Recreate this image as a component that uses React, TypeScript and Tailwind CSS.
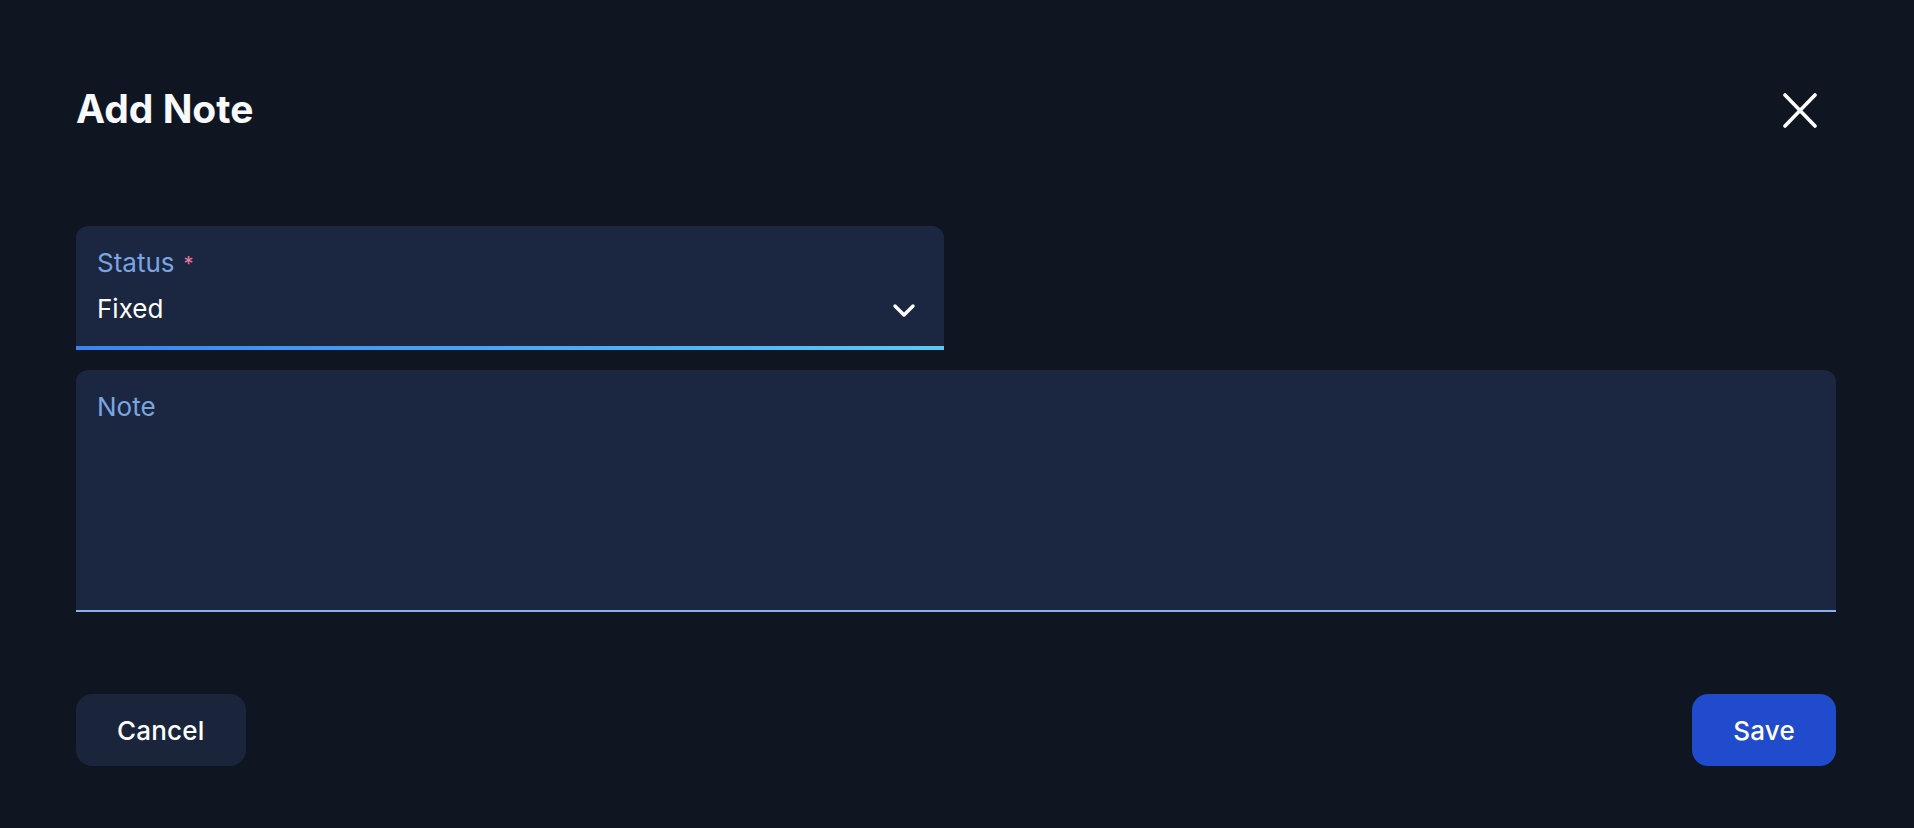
import React from 'react';

const CloseIcon: React.FC = () => (
  <svg width="34" height="35" viewBox="0 0 34 35" fill="none" className="text-white">
    <path d="M2 2L32 33M32 2L2 33" stroke="currentColor" strokeWidth="3.6" strokeLinecap="round" />
  </svg>
);

const ChevronDown: React.FC = () => (
  <svg width="24" height="16" viewBox="0 0 24 16" fill="none" className="text-white">
    <polyline points="3,3 12,12 21,3" stroke="currentColor" strokeWidth="3.4" strokeLinecap="round" strokeLinejoin="round" />
  </svg>
);

const App: React.FC = () => {
  return (
    <div className="w-full min-h-screen bg-[#0f1521] text-white font-[Inter,sans-serif] pl-[76px] pr-[78px] pt-[85px]">
      {/* Header */}
      <div className="flex items-center justify-between h-[48px]">
        <h1 className="text-[39px] leading-[48px] font-bold text-[#f8f9fc]">Add Note</h1>
        <button className="mr-[19px] mt-[2px]">
          <CloseIcon />
        </button>
      </div>

      {/* Status select */}
      <div className="mt-[93px] w-[868px]">
        <div className="h-[120px] bg-[#1b2740] rounded-t-[12px] pt-[21px] pl-[21px] pr-[28px]">
          <div className="flex items-start text-[26px] leading-[32px] text-[#7ba4e2]">
            <span>Status</span>
            <span className="ml-[9px] mt-[7px] text-[20px] leading-[20px] text-[#e87a98]">*</span>
          </div>
          <div className="mt-[14px] flex items-center justify-between">
            <span className="text-[26px] leading-[32px] text-white">Fixed</span>
            <span className="mt-[4px]">
              <ChevronDown />
            </span>
          </div>
        </div>
        <div className="h-[4px] bg-gradient-to-r from-[#3a84f0] to-[#5bc8f6]"></div>
      </div>

      {/* Note textarea */}
      <div className="mt-[20px] h-[242px] bg-[#1b2740] rounded-t-[12px] border-b-2 border-[#8ab1ec] pt-[21px] px-[21px]">
        <div className="text-[26px] leading-[32px] text-[#7ba4e2]">Note</div>
      </div>

      {/* Actions */}
      <div className="mt-[82px] flex items-center justify-between">
        <button className="h-[72px] px-[41px] rounded-2xl bg-[#1a253c] text-[26px] font-medium text-white tracking-[0.2px]">
          Cancel
        </button>
        <button className="h-[72px] px-[41px] rounded-2xl bg-[#1f4bcc] text-[26px] font-medium text-white tracking-[0.2px]">
          Save
        </button>
      </div>
    </div>
  );
};

export default App;
